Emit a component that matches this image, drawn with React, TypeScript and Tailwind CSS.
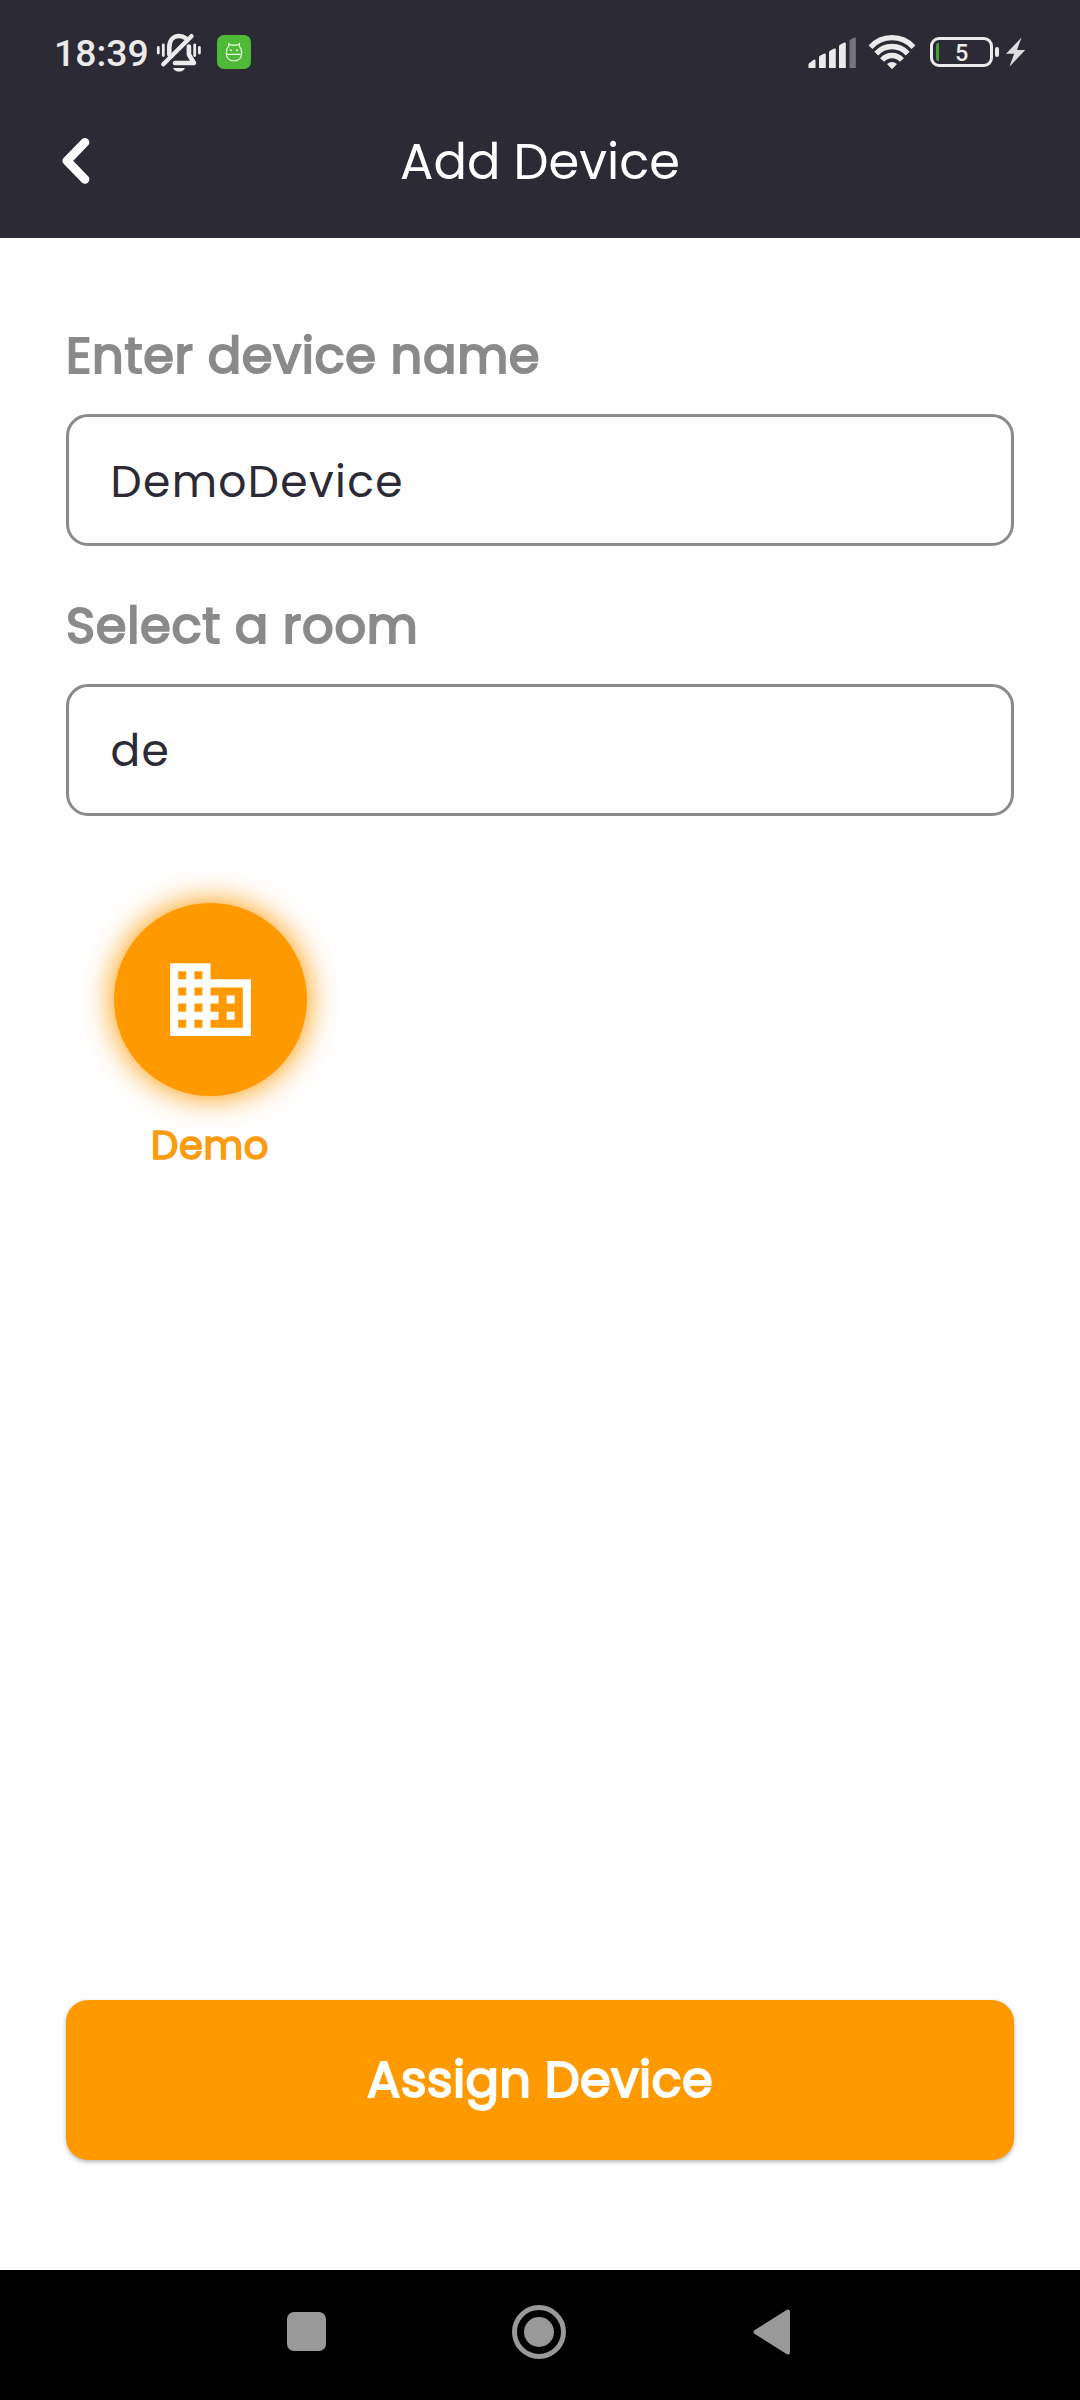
import type { ReactNode } from "react";

function StatusBar() {
  return (
    <div className="flex h-[86px] items-start text-[#ebebeb]">
      <div className="ml-[54px] mt-[31px] w-[102px] whitespace-nowrap font-[Roboto,sans-serif] text-[37.3px] font-medium leading-[44px]">
        18:39
      </div>
      {/* Muted bell */}
      <svg className="mt-[32px] h-[42px] w-[46px]" viewBox="156 32 46 42" fill="none" stroke="#ebebeb" strokeLinecap="round" strokeLinejoin="round">
        <path d="M158.3 47.5v5.5M163.3 45v10.5M194.7 45v10.5M199.4 47.5v5.5" strokeWidth="2.8" />
        <path d="M169.3 54.5V47.5C169.3 40.500 173.200 36 179 36c2.800 0 5 .8 6.800 2.200M188.900 46.500V54.500l5 8.500H175" strokeWidth="4.600" />
        <path d="M191.5 36.2 163.3 64.3" strokeWidth="4.4" />
        <path d="M173 68h12c-1.2 2.6-3.4 3.6-6 3.6s-4.8-1-6-3.6z" fill="#ebebeb" stroke="none" />
      </svg>
      {/* Green app badge */}
      <svg className="ml-[15px] mt-[35px] h-[34px] w-[34px]" viewBox="0 0 34 34" fill="none">
        <rect width="34" height="34" rx="7" fill="#4fba38" />
        <path d="M9.3 18.3c0-3.2.8-5.5 2.4-7.2V8.8l2.5 1.4h5.6l2.5-1.4v2.3c1.6 1.7 2.4 4 2.4 7.2 0 4.6-3 7.6-7.7 7.6s-7.7-3-7.7-7.6zM9.5 19.3h15" stroke="#eafbe6" strokeWidth="1.2" />
        <circle cx="14" cy="15.3" r="1" fill="#eafbe6" />
        <circle cx="20" cy="15.3" r="1" fill="#eafbe6" />
      </svg>
      {/* Signal strength */}
      <svg className="ml-[557px] mt-[36px] h-[33px] w-[48px]" viewBox="808 36 48 33" fill="#ebebeb">
        <path d="M808.5 68v-3.500q0-1 .9-1.500l4.400-3.200q1.700-.8 1.700.8V68z" />
        <path d="M819 68V57.3q0-1 .9-1.5l4.4-2.2q1.5-.6 1.5.8V68z" />
        <path d="M829 68V52.3q0-1 .9-1.5l4.4-2.2q1.5-.6 1.5.8V68z" />
        <path d="M839 68V46.3q0-1 .9-1.5l4.4-2.2q1.500-.6 1.500.8V68z" />
        <path d="M849.5 68V41.3q0-1 .9-1.5l4.1-2.2q1.3-.6 1.3.8V68z" fill="#777680" />
      </svg>
      {/* Wi-Fi */}
      <svg className="ml-[12px] mt-[34px] h-[37px] w-[48px]" viewBox="868 34 48 37" fill="none" stroke="#ebebeb" strokeWidth="5.4">
        <path d="M870.5 47.2A29 29 0 0 1 913.5 47.2" />
        <path d="M876.3 53.600A21 21 0 0 1 907.7 53.600" />
        <path d="M882.1 60A13 13 0 0 1 901.9 60" />
        <path d="M887 63.900Q892 59.900 897 63.900L892.800 68.500Q892 69.200 891.200 68.500Z" fill="#ebebeb" stroke="none" />
      </svg>
      {/* Battery */}
      <div className="ml-[14px] mt-[37px] flex h-[30px] w-[63px] items-center rounded-[9px] border-3 border-[#ebebeb]">
        <div className="ml-[3px] h-[18px] w-[3px] rounded-l-[2px] bg-[#4a9c35]" />
        <div className="ml-[16px] pt-px font-[Roboto,sans-serif] text-[23.5px] font-medium leading-[26px]">5</div>
      </div>
      <div className="ml-[2px] mt-[47px] h-[10px] w-[4px] rounded-[2px] bg-[#ebebeb]" />
      <svg className="ml-[7px] mt-[37px] h-[30px] w-[20px]" viewBox="1006 37 20 30" fill="#dddddf">
        <path d="M1021.5 37.5 1006 53.8h8.200l-4.800 12.900 15.800-16.600h-8.200z" />
      </svg>
    </div>
  );
}

function Header() {
  return (
    <header className="h-[238px] bg-[#2b2a35]">
      <StatusBar />
      <div className="grid h-[152px] grid-cols-[108px_1fr_108px] items-center">
        <svg className="ml-[60px] -mt-[2px] h-[48px] w-[32px]" viewBox="60 137 32 48" fill="none" stroke="#fff" strokeWidth="8.8" strokeLinecap="round" strokeLinejoin="round">
          <path d="M85 142.3 67 160.900 85 179.300" />
        </svg>
        <h1 className="text-center text-[49.5px] leading-[74px] text-white">Add Device</h1>
      </div>
    </header>
  );
}

function Field({ label, value }: { label: string; value: string }) {
  return (
    <label className="block">
      <span className="block text-[49.5px] leading-[74px] tracking-[0.7px] text-[#8a8a8a] [-webkit-text-stroke:2px_#8a8a8a]">
        {label}
      </span>
      <span className="mt-[21px] flex h-[132px] items-center rounded-[22px] border-3 border-[#8a8a8a] pl-[41.5px] pt-[3px] text-[44px] leading-[66px] tracking-[1.37px] text-[#2b2a35]">
        {value}
      </span>
    </label>
  );
}

function Room({ name, children }: { name: string; children: ReactNode }) {
  return (
    <div className="flex w-[288px] flex-col items-center">
      <div className="flex size-[193px] items-center justify-center rounded-full bg-[#ff9900] shadow-[0_0_30px_1px_#ff9900]">
        {children}
      </div>
      <div className="mt-[21px] text-[38.5px] leading-[58px] tracking-[0.6px] text-[#fa9b10] [-webkit-text-stroke:1.6px_#fa9b10]">
        {name}
      </div>
    </div>
  );
}

export default function App() {
  return (
    <div className="flex h-[2400px] w-[1080px] flex-col overflow-hidden bg-[#fefefe] font-[Poppins,Inter,sans-serif]">
      <Header />
      <main className="flex flex-1 flex-col px-[66px] pb-[110px] pt-[81px]">
        <div className="flex flex-col gap-[42.5px]">
          <Field label="Enter device name" value="DemoDevice" />
          <Field label="Select a room" value="de" />
        </div>
        <div className="mt-[87px] flex">
          <Room name="Demo">
            <svg className="size-[97px]" viewBox="0 0 24 24" fill="#fff">
              <path d="M12 7V3H2v18h20V7H12zM6 19H4v-2h2v2zm0-4H4v-2h2v2zm0-4H4V9h2v2zm0-4H4V5h2v2zm4 12H8v-2h2v2zm0-4H8v-2h2v2zm0-4H8V9h2v2zm0-4H8V5h2v2zm10 12h-8v-2h2v-2h-2v-2h2v-2h-2V9h8v10zm-2-8h-2v2h2v-2zm0 4h-2v2h2v-2z" />
            </svg>
          </Room>
        </div>
        <button className="mt-auto h-[160px] rounded-[22px] bg-[#ff9900] text-[49.5px] leading-[74px] tracking-[0.3px] text-white shadow-[0_2px_4px_rgba(0,0,0,0.28)] [-webkit-text-stroke:2px_#fff]">
          Assign Device
        </button>
      </main>
      <nav className="flex h-[130px] items-start bg-black">
        <div className="ml-[287px] mt-[42px] size-[39px] rounded-[7px] bg-[#999999]" />
        <div className="ml-[186px] mt-[35px] flex size-[54px] items-center justify-center rounded-full border-[5px] border-[#999999]">
          <div className="size-[30px] rounded-full bg-[#999999]" />
        </div>
        <svg className="ml-[187px] mt-[38px] h-[48px] w-[38px]" viewBox="753 2308 38 48" fill="#999" stroke="#999" strokeWidth="4" strokeLinejoin="round">
          <path d="M788 2311.5V2352.5L755.5 2332z" />
        </svg>
      </nav>
    </div>
  );
}
